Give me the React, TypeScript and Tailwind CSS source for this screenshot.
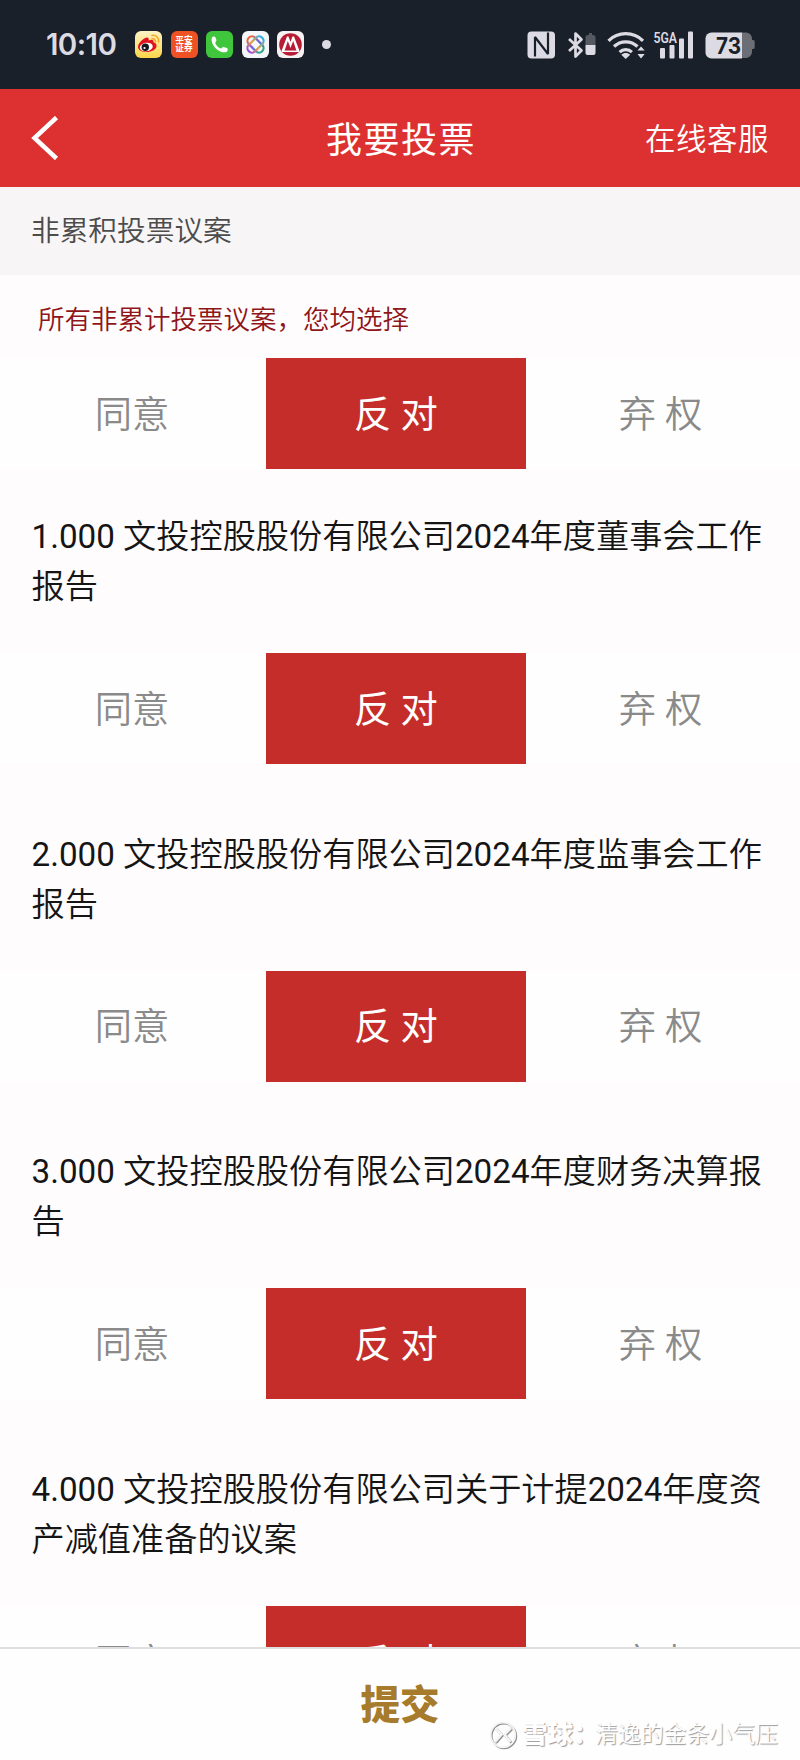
import React, { useState } from 'react'

type Vote = 'agree' | 'against' | 'abstain'

interface Proposal {
  id: string;
  title: string;
}

const PROPOSALS: Proposal[] = [
  { id: '1.000', title: '文投控股股份有限公司2024年度董事会工作报告' },
  { id: '2.000', title: '文投控股股份有限公司2024年度监事会工作报告' },
  { id: '3.000', title: '文投控股股份有限公司2024年度财务决算报告' },
  { id: '4.000', title: '文投控股股份有限公司关于计提2024年度资产减值准备的议案' },
]

const OPTIONS: { value: Vote; label: string; className: string }[] = [
  { value: 'agree', label: '同意', className: 'w-[266px] pr-[2px]' },
  { value: 'against', label: '反 对', className: 'w-[260px]' },
  { value: 'abstain', label: '弃 权', className: 'w-[274px] pr-[5px]' },
]

const AppIcons: React.FC = () => (
  <div className="flex items-center gap-[8.5px]">
    {/* Weibo */}
    <svg viewBox="0 0 27 27" className="size-[27px]">
      <defs>
        <linearGradient id="weibo" x1="0" y1="0" x2="0" y2="1">
          <stop offset="0" stopColor="#fff3c4" />
          <stop offset="1" stopColor="#fbd649" />
        </linearGradient>
      </defs>
      <rect width="27" height="27" rx="6" fill="url(#weibo)" />
      <path d="M3 16c0-4 6-9.500 9-9.500 2 0 2 1.500 1.500 3 2.500-1.200 5.500-1 5 1.800 2.500.7 3 2.200 3 3.700 0 3.500-5 6-9.800 6S3 19 3 16z" fill="#e0141e" />
      <ellipse cx="11.300" cy="16" rx="6.500" ry="4.300" fill="#fff" transform="rotate(-8 11.300 16)" />
      <circle cx="10.300" cy="16.300" r="3.700" fill="#16181c" />
      <circle cx="9.500" cy="17" r="1.100" fill="#fff" />
      <path d="M17 4.500c4-.8 7.200 2 6.600 6.500M17 7.800c2.200-.3 3.700 1 3.400 3.200" fill="none" stroke="#f5a623" strokeWidth="1.500" strokeLinecap="round" />
    </svg>
    {/* Ping An Securities */}
    <div className="flex size-[27px] flex-col items-center justify-center rounded-[6px] bg-[#ee5123] text-[8.7px] leading-[7.5px] font-bold text-white">
      <span>平安</span>
      <span>证券</span>
    </div>
    {/* Phone */}
    <svg viewBox="0 0 27 27" className="size-[27px]">
      <rect width="27" height="27" rx="6" fill="#40c63c" />
      <path d="M5.800 6.800c.4-1.300 3-2 3.600-.6l1 2.800c.4 1.100-.8 1.600-1.100 2.500-.3 1 1.200 3 2.200 4 1 .9 2.700 2.100 3.700 1.900.9-.2 1.300-1.500 2.400-1.300l3.300.8c1.500.5.9 3.200-.2 3.900-1.800 1.100-5.400.5-8.300-1.400-2.800-1.900-5-4.300-6-7-.8-2.300-1-4.200-.6-5.600z" fill="#fff" />
    </svg>
    {/* Gallery knot */}
    <svg viewBox="0 0 27 27" className="size-[27px]">
      <defs>
        <linearGradient id="knotA" x1="0" y1="0" x2="1" y2="0">
          <stop offset="0" stopColor="#ee6a3a" />
          <stop offset=".5" stopColor="#6e62e8" />
          <stop offset="1" stopColor="#27b07e" />
        </linearGradient>
        <linearGradient id="knotB" x1="0" y1="0" x2="1" y2="0">
          <stop offset="0" stopColor="#9a45dc" />
          <stop offset=".45" stopColor="#efa638" />
          <stop offset="1" stopColor="#2aaeea" />
        </linearGradient>
      </defs>
      <rect width="27" height="27" rx="6" fill="#f5f6fa" />
      <g fill="none" strokeWidth="2.200">
        <rect x="4" y="9" width="19" height="9" rx="4.500" transform="rotate(45 13.500 13.500)" stroke="url(#knotA)" />
        <rect x="4" y="9" width="19" height="9" rx="4.500" transform="rotate(-45 13.500 13.500)" stroke="url(#knotB)" />
      </g>
    </svg>
    {/* Merchants Bank */}
    <svg viewBox="0 0 27 27" className="size-[27px]">
      <rect width="27" height="27" rx="6" fill="#f6f1f3" />
      <circle cx="13.500" cy="13.500" r="11.300" fill="#b81c35" />
      <path d="M4.500 20 10 5.500h1.500l2 5.500 2-5.500H17L22.500 20l-2.800.5-3.500-10.500-2.700 7-2.700-7-3.500 10.500z" fill="#fff" />
      <path d="M5 20.300h17" stroke="#fff" strokeWidth="1.500" />
    </svg>
  </div>
)

const StatusBar: React.FC = () => (
  <div className="flex h-[89px] shrink-0 items-center bg-[#1a202a] pl-[46px] text-[#dcdbe3]">
    <span className="w-[89px] font-[Inter] text-[29.500px] leading-none font-semibold tracking-[-0.6px]">10:10</span>
    <AppIcons />
    <span className="ml-[18px] size-[9px] rounded-full bg-[#dcdbe3]" />
    <svg viewBox="0 0 232 30" className="ml-[196px] h-[30px] w-[232px]" fill="#dcdbe3">
      {/* NFC */}
      <rect x=".5" y="1.500" width="27.500" height="27" rx="4" />
      <path d="M8 26.500V7l13 17V2.500" fill="none" stroke="#1a202a" strokeWidth="2.200" strokeLinejoin="bevel" />
      {/* Bluetooth with its battery */}
      <path d="M42 9l12.500 11.500-6 6V3.500l6 6L42 21" fill="none" stroke="#dcdbe3" strokeWidth="2.700" strokeLinejoin="round" />
      <path d="M62 3h3v2h1a2.500 2.500 0 0 1 2.500 2.500V15H58.500V7.500A2.500 2.500 0 0 1 61 5h1z" fill="#555961" />
      <path d="M58.500 15h10v8a2 2 0 0 1-2 2h-6a2 2 0 0 1-2-2z" />
      {/* Wi-Fi */}
      <g fill="none" stroke="#dcdbe3" strokeWidth="3.200">
        <path d="M81.500 10.800a24.500 24.500 0 0 1 34.500 0" />
        <path d="M87 16.500a17 17 0 0 1 23.500 0" />
      </g>
      <path d="M91.500 21a10.500 10.500 0 0 1 14.500 0l-2.200 2.300a7.500 7.500 0 0 0-10.100 0z" />
      <path d="M94.300 24.800c2.500-2.300 6.400-2.300 8.900 0L98.700 29z" />
      <path d="M110.500 20.500 114 16.500l3.700 4zM110.500 24h7.200l-3.700 4.500z" />
      {/* Signal */}
      <rect x="133" y="18" width="5" height="10.500" rx="1" />
      <rect x="142.500" y="15" width="5" height="13.500" rx="1" />
      <rect x="152" y="8.500" width="5" height="20" rx="1" />
      <rect x="161" y="1.500" width="5" height="27" rx="1" />
      <text x="126.500" y="12.500" fontFamily="Roboto" fontSize="15" fontWeight="600" textLength="23.500" lengthAdjust="spacingAndGlyphs">5GA</text>
      {/* Battery */}
      <path d="M215 2.500h4a6 6 0 0 1 6 6V10h1.200a1.500 1.500 0 0 1 1.500 1.500v6a1.500 1.500 0 0 1-1.500 1.500H225v3a6 6 0 0 1-6 6h-4z" fill="#6b6e75" />
      <path d="M184.500 2.500H215v26h-30.500a6 6 0 0 1-6-6v-14a6 6 0 0 1 6-6z" />
      <text x="189" y="23.500" fill="#1a202a" fontFamily="Inter" fontSize="22.500" fontWeight="700" textLength="25" lengthAdjust="spacingAndGlyphs">73</text>
    </svg>
  </div>
)

// Latin digits are set one step heavier than the Chinese text around them
const ProposalTitle: React.FC<{ text: string }> = ({ text }) => (
  <p className="mb-[41px] pr-[29px] pl-[31.5px] text-[33.2px] leading-[50px] font-[350] text-[#151515]">
    {text.split(/([\d. ]+)/).filter(Boolean).map((part, index) =>
      /^\d/.test(part) ? <span key={index} className="font-normal">{part}</span> : part
    )}
  </p>
)

interface VoteRowProps {
  value: Vote;
  onChange: (vote: Vote) => void;
}

const VoteRow: React.FC<VoteRowProps> = ({ value, onChange }) => (
  <div className="flex h-[111px] bg-[#fefefe]">
    {OPTIONS.map((option) => (
      <button
        key={option.value}
        type="button"
        onClick={() => onChange(option.value)}
        className={`${option.className} h-full pt-[4px] text-[37.3px] leading-none ${
          value === option.value ? 'bg-[#c42d29] text-white' : 'font-[350] text-[#8a8a8a]'
        }`}
      >
        {option.label}
      </button>
    ))}
  </div>
)

export default function App() {
  const [all, setAll] = useState<Vote>('against')
  const [votes, setVotes] = useState<Record<string, Vote>>({})

  // Picking an option for all proposals clears the individual choices
  const handleAll = (vote: Vote) => {
    setAll(vote)
    setVotes({})
  }

  return (
    <div className="relative flex h-[1760px] w-[800px] flex-col overflow-hidden bg-[#fefcfd] font-[Roboto,'Noto_Sans_CJK_SC',sans-serif]">
      <StatusBar />

      <header className="flex h-[98px] shrink-0 items-center bg-[#dd3131] pr-[31px] pl-[31px] text-white">
        <div className="flex-1">
          <svg viewBox="0 0 28 44" className="h-[44px] w-[28px]" fill="none" stroke="currentColor" strokeWidth="4.500">
            <path d="M25.500 1.500 3.500 22l22 20.500" />
          </svg>
        </div>
        <h1 className="pt-[5px] pl-[2px] text-[36px] leading-none tracking-[1.5px]">我要投票</h1>
        <div className="flex-1 pt-[5px] text-right text-[30.5px] leading-none font-[350] tracking-[0.5px]">在线客服</div>
      </header>

      <div className="flex h-[88px] shrink-0 items-center bg-[#f8f5f6] pt-[2px] pl-[31px] text-[28.7px] font-[350] text-[#4c4c4c]">
        非累积投票议案
      </div>

      {/* Scrolling list, cut off by the submit bar */}
      <main className="min-h-0 flex-1 overflow-hidden">
        <div className="flex h-[83px] items-center pt-[6px] pl-[38px] text-[26.5px] font-[350] text-[#8f1518]">
          所有非累计投票议案，您均选择
        </div>
        <VoteRow value={all} onChange={handleAll} />
        {PROPOSALS.map((proposal, index) => (
          <section key={proposal.id} className={index === 0 ? 'pt-[43px]' : 'pt-[65.6px]'}>
            <ProposalTitle text={`${proposal.id} ${proposal.title}`} />
            <VoteRow
              value={votes[proposal.id] ?? all}
              onChange={(vote) => setVotes({ ...votes, [proposal.id]: vote })}
            />
          </section>
        ))}
      </main>

      <footer className="h-[113px] shrink-0 border-t-2 border-[#dfdfdf] bg-[#fefefe]">
        <button type="button" className="h-full w-full pt-[2px] text-[39.5px] leading-none font-black text-[#a67b2b]">
          提交
        </button>
      </footer>

      {/* Watermark */}
      <div className="absolute right-[22px] bottom-[11px] flex items-center text-white [text-shadow:1px_1px_1px_#999]">
        <svg viewBox="0 0 28 28" className="mr-[5px] size-[28px] drop-shadow-[1px_1px_0.5px_#8d8d8d]" fill="none" stroke="#f4f4f4">
          <circle cx="14" cy="14" r="12.300" strokeWidth="1.800" />
          <path d="M6.500 7l6 6.500L6 21M22 7l-6.500 6.500 6 7.500" strokeWidth="2.600" />
        </svg>
        <span className="w-[73px] text-[25.5px] leading-none font-black whitespace-nowrap">雪球：</span>
        <span className="text-[22.900px] leading-none font-[350]">清逸的金条小气压</span>
      </div>
    </div>
  )
}
